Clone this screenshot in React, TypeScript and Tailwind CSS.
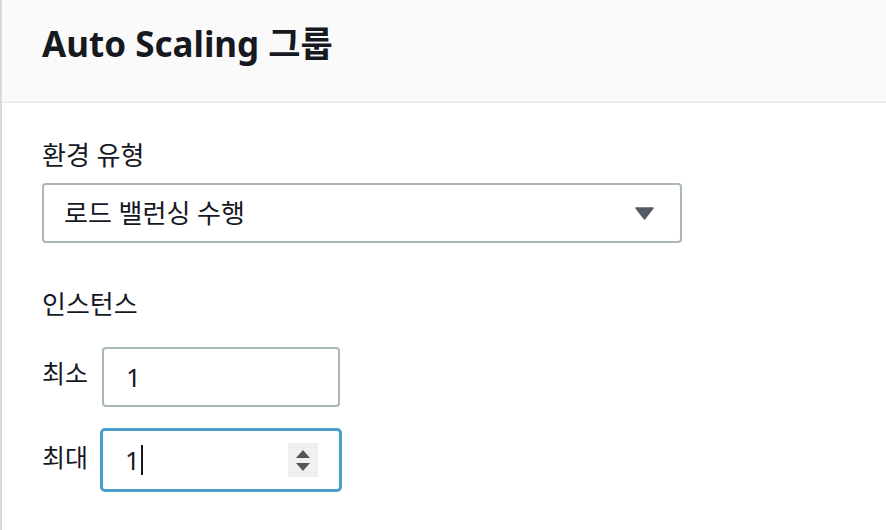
import React from "react";

const font = { fontFamily: '"Noto Sans", "Noto Sans CJK KR", sans-serif' };

export default function App() {
  return (
    <div className="w-[886px] h-[530px] bg-white border-l-2 border-[#d5dbdb] text-[#16191f] overflow-hidden" style={font}>
      <div className="h-[103px] bg-[#fafafa] border-b-2 border-[#eaeded] flex items-center pl-[40px] pb-[14px]">
        <h2 className="text-[35px] font-bold tracking-[0px] leading-[40px]">Auto Scaling 그룹</h2>
      </div>
      <div className="pl-[40px] pt-[36px]">
        <div className="text-[26px] leading-[32px]">환경 유형</div>
        <div className="mt-[12px] w-[640px] h-[60px] border-2 border-[#aab7b8] rounded-[4px] flex items-center justify-between pl-[20px] pr-[26px]">
          <span className="text-[26px]">로드 밸런싱 수행</span>
          <svg width="19" height="13" viewBox="0 0 19 13">
            <path d="M1 1 L18 1 L9.5 12 Z" fill="#545b64" stroke="#545b64" strokeWidth="1.5" strokeLinejoin="round" />
          </svg>
        </div>
        <div className="mt-[45px] text-[26px] leading-[32px]">인스턴스</div>
        <div className="mt-[27px] flex items-center gap-[12px]">
          <span className="text-[25px] w-[48px] whitespace-nowrap -mt-[6px]">최소</span>
          <div className="w-[238px] h-[60px] border-2 border-[#aab7b8] rounded-[4px] flex items-center pl-[22px] text-[26px]">1</div>
        </div>
        <div className="mt-[21px] flex items-center gap-[10px]">
          <span className="text-[25px] w-[48px] whitespace-nowrap -mt-[4px]">최대</span>
          <div className="w-[242px] h-[64px] border-[3px] border-[#4aa1c7] rounded-[5px] flex items-center justify-between pl-[22px] pr-[21px] text-[26px]">
            <span className="flex items-center">1<span className="inline-block w-[2px] h-[30px] bg-[#16191f] ml-[1px]" /></span>
            <div className="w-[30px] h-[34px] bg-[#f0f0f0] flex flex-col items-center justify-center gap-[5px]">
              <svg width="14" height="8" viewBox="0 0 14 8"><path d="M0 8 L7 0 L14 8 Z" fill="#555" /></svg>
              <svg width="14" height="8" viewBox="0 0 14 8"><path d="M0 0 L14 0 L7 8 Z" fill="#555" /></svg>
            </div>
          </div>
        </div>
      </div>
    </div>
  );
}
